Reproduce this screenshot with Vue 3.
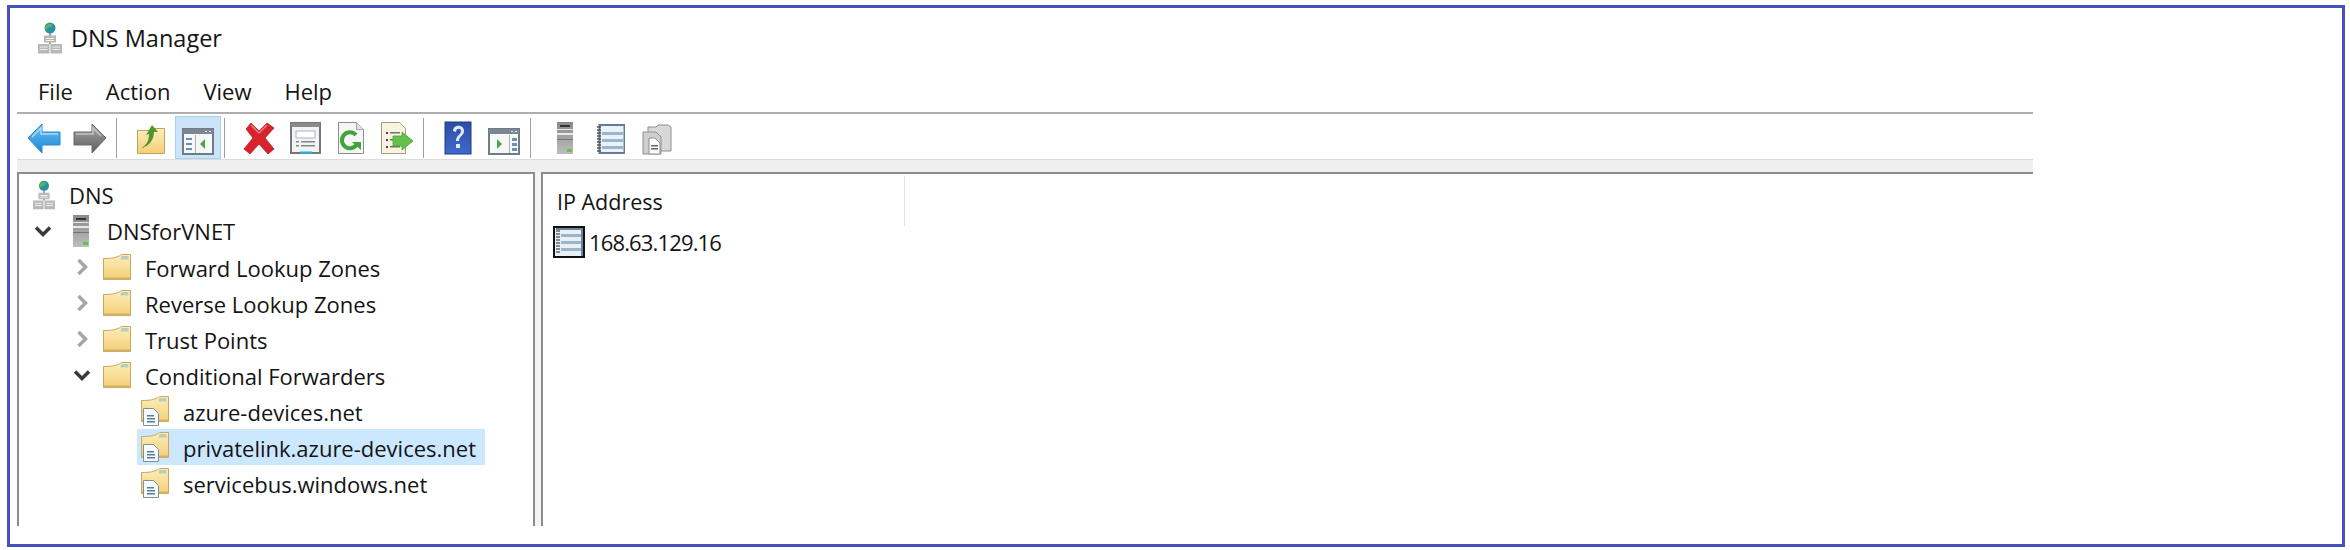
<script setup>
const menus = ['File', 'Action', 'View', 'Help']

const tree = [
  { level: 0, icon: 'dns', label: 'DNS' },
  { level: 1, icon: 'server', label: 'DNSforVNET', chevron: 'open' },
  { level: 2, icon: 'folder', label: 'Forward Lookup Zones', chevron: 'closed' },
  { level: 2, icon: 'folder', label: 'Reverse Lookup Zones', chevron: 'closed' },
  { level: 2, icon: 'folder', label: 'Trust Points', chevron: 'closed' },
  { level: 2, icon: 'folder', label: 'Conditional Forwarders', chevron: 'open' },
  { level: 3, icon: 'zone', label: 'azure-devices.net' },
  { level: 3, icon: 'zone', label: 'privatelink.azure-devices.net', selected: true },
  { level: 3, icon: 'zone', label: 'servicebus.windows.net' }
]
</script>

<template>
  <div class="frame">
    <svg class="defs" width="0" height="0" aria-hidden="true">
      <defs>
        <linearGradient id="g-folder" x1="0" y1="0" x2="0" y2="1">
          <stop offset="0" stop-color="#fdeeba" />
          <stop offset="1" stop-color="#f3cf78" />
        </linearGradient>
        <linearGradient id="g-blue" x1="0" y1="0" x2="0" y2="1">
          <stop offset="0" stop-color="#6fc0f2" />
          <stop offset="1" stop-color="#1a86d8" />
        </linearGradient>
        <linearGradient id="g-gray" x1="0" y1="0" x2="0" y2="1">
          <stop offset="0" stop-color="#a8a8a8" />
          <stop offset="1" stop-color="#5c5c5c" />
        </linearGradient>
        <linearGradient id="g-server" x1="0" y1="0" x2="0" y2="1">
          <stop offset="0" stop-color="#8a8a8a" />
          <stop offset="1" stop-color="#bdbdbd" />
        </linearGradient>
        <linearGradient id="g-help" x1="0" y1="0" x2="0" y2="1">
          <stop offset="0" stop-color="#2d4da6" />
          <stop offset="1" stop-color="#4169c8" />
        </linearGradient>
        <symbol id="dns" viewBox="0 0 24 32">
          <circle cx="12" cy="6" r="5.500" fill="#2c8fa8" />
          <path d="M8 3.500c2-2 5-2 6-1 1 1-1 3-3 3s-1 3-3 2-1-3 0-4z" fill="#5fb35a" />
          <path d="M11 11h2v3h-2zM11 20h2v2h-2z" fill="#9a9a9a" />
          <path d="M6 13.500h12v7H6zM0 22h11.500v9.500H0zM12.500 22H24v9.500H12.500z" fill="#b8b8b8" />
          <path d="M8 16h8v1H8zM8 18h8v1H8zM2 24.500h7.500v1H2zM2 27h7.500v1H2zM14.500 24.500H22v1h-7.500zM14.500 27H22v1h-7.500z" fill="#efefef" />
        </symbol>
        <symbol id="server" viewBox="0 0 16 32">
          <rect width="16" height="32" fill="url(#g-server)" />
          <rect x="3" y="3" width="10" height="2" fill="#333" />
          <path d="M0 7h16v1H0zM0 11h16v2H0z" fill="#e8e8e8" />
          <rect y="17" width="16" height="1" fill="#777" />
          <rect x="10" y="27" width="5" height="3" fill="#63c24a" />
        </symbol>
        <symbol id="folder" viewBox="0 0 28 26">
          <path d="M.5 25.500V4.500C8 4.500 14 4 18.500.5h9v25z" fill="url(#g-folder)" stroke="#c9a75f" />
          <path d="M18.500 2h7v3.500h-8z" fill="#b6cdbf" />
          <path d="M1 24.500h26" stroke="#d4b26a" stroke-width="2" />
        </symbol>
        <symbol id="notebook" viewBox="0 0 28 30">
          <rect x="2.500" y="1" width="25" height="28" fill="#eaf1f7" stroke="#667a94" stroke-width="2" />
          <path d="M5 8h21v3H5zM5 15h21v3H5zM5 22h21v3H5z" fill="#9ab6cc" />
          <path d="M0 3h4M0 6h4M0 9h4M0 12h4M0 15h4M0 18h4M0 21h4M0 24h4M0 27h4" stroke="#555" stroke-width="1.400" />
        </symbol>
      </defs>
    </svg>

    <div class="window">
      <div class="title-bar">
        <svg class="title-icon" width="24" height="32"><use href="#dns" /></svg>
        <span class="title-text">DNS Manager</span>
      </div>

      <div class="menu-bar">
        <span v-for="m in menus" :key="m" class="menu-item">{{ m }}</span>
      </div>

      <div class="toolbar">
        <!-- back -->
        <div class="tool">
          <svg width="34" height="34" viewBox="0 0 34 34">
            <path d="M1 17 15 3v8h18v13H15v8z" fill="url(#g-blue)" stroke="#2a8ad6" />
            <path d="M5 16 14 7v6h17" fill="none" stroke="#a9dcf8" stroke-width="1.500" />
          </svg>
        </div>
        <!-- forward -->
        <div class="tool">
          <svg width="34" height="34" viewBox="0 0 34 34">
            <path d="M33 17 19 3v8H1v13h18v8z" fill="url(#g-gray)" stroke="#6b6b6b" />
            <path d="M3 13h17V7l8 8" fill="none" stroke="#c4c4c4" stroke-width="1.500" />
          </svg>
        </div>
        <div class="tool-sep"></div>
        <!-- up one level -->
        <div class="tool">
          <svg width="34" height="34" viewBox="0 0 34 34">
            <path d="M3.500 9.500h13l3-2h11v25h-27z" fill="url(#g-folder)" stroke="#c2a15c" />
            <path d="M7 27c6-3 8-8 8-14l-3 1 6-10 6 7-4 0c0 7-4 14-13 16z" fill="#4c9a2e" />
          </svg>
        </div>
        <!-- show/hide tree -->
        <div class="tool tool-on">
          <svg width="34" height="34" viewBox="0 0 34 34">
            <rect x="2" y="8" width="30" height="25" fill="#f5f8f6" stroke="#6f7b88" stroke-width="2" />
            <path d="M2 8h30v5H2z" fill="#7b8794" />
            <path d="M24 10h2v1h-2zM28 10h2v1h-2z" fill="#e8e8e8" />
            <path d="M14 14h1v18h-1z" fill="#aab2bb" />
            <path d="M5 17h6v2H5zM5 22h6v2H5zM5 27h6v2H5z" fill="#6a8fb5" />
            <path d="M24 18v10l-5-5z" fill="#4fa63c" />
          </svg>
        </div>
        <div class="tool-sep"></div>
        <!-- delete -->
        <div class="tool">
          <svg width="34" height="34" viewBox="0 0 34 34">
            <path d="M4 8 9 2l8 8 8-8 7 5-9 10 9 11-6 5-9-10-9 10-6-5 9-11z" fill="#d9232a" stroke="#b81d22" stroke-width=".8" />
            <path d="M9 4l8 8 8-8" fill="none" stroke="#f47f7f" stroke-width="1.500" />
          </svg>
        </div>
        <!-- properties -->
        <div class="tool">
          <svg width="34" height="34" viewBox="0 0 34 34">
            <rect x="3" y="2" width="29" height="30" fill="#f3f3f3" stroke="#777" stroke-width="2" />
            <rect x="3" y="2" width="29" height="4" fill="#8a8a8a" />
            <path d="M8 10h19v7H8z" fill="#fff" stroke="#a9b3bc" />
            <path d="M8 20h3v1.500H8zM13 20h14v1.500H13zM8 24h3v1.500H8zM13 24h14v1.500H13z" fill="#7a8896" />
            <rect x="12" y="30.500" width="12" height="2.500" fill="#32a6dd" />
          </svg>
        </div>
        <!-- refresh -->
        <div class="tool">
          <svg width="34" height="34" viewBox="0 0 34 34">
            <path d="M4.500 1.500h18l7 7v24h-25z" fill="#f6f6f4" stroke="#8d8d8d" />
            <path d="M22.500 1.500v7h7" fill="#e2e2e2" stroke="#a5a5a5" />
            <path d="M22 14a8 8 0 1 0 1 9" fill="none" stroke="#3da53a" stroke-width="4" />
            <path d="M18 21h9v8z" fill="#3da53a" />
          </svg>
        </div>
        <!-- export list -->
        <div class="tool">
          <svg width="34" height="34" viewBox="0 0 34 34">
            <path d="M1.500 1.500h18l6 6v25h-24z" fill="#f9f3df" stroke="#a29a84" />
            <path d="M6 11h2v2H6zM6 18h2v2H6zM6 25h2v2H6z" fill="#444" />
            <path d="M10 11h10v1.500H10zM10 18h10v1.500H10zM10 25h10v1.500H10z" fill="#75736b" />
            <path d="M13 15h9v-4l11 9-11 9v-4h-9z" fill="#62c24c" stroke="#4ca53b" stroke-width=".8" />
          </svg>
        </div>
        <div class="tool-sep"></div>
        <!-- help -->
        <div class="tool">
          <svg width="34" height="34" viewBox="0 0 34 34">
            <rect x="4" y="1" width="26" height="32" fill="url(#g-help)" stroke="#1f3a86" />
            <path d="M12 10c0-7 11-7 11 0 0 5-5 5-5 10h-3c0-6 5-6 5-10 0-3-5-3-5 1z" fill="#dfe7f8" />
            <rect x="15" y="23" width="4" height="4" fill="#dfe7f8" />
          </svg>
        </div>
        <!-- action pane -->
        <div class="tool">
          <svg width="34" height="34" viewBox="0 0 34 34">
            <rect x="2" y="8" width="30" height="25" fill="#f5f8f6" stroke="#6f7b88" stroke-width="2" />
            <path d="M2 8h30v5H2z" fill="#7b8794" />
            <path d="M24 10h2v1h-2zM28 10h2v1h-2z" fill="#e8e8e8" />
            <path d="M22 14h1v18h-1z" fill="#aab2bb" />
            <path d="M25 17h5v3h-5zM25 22h5v3h-5zM25 27h5v3h-5z" fill="#6a8fb5" />
            <path d="M10 18v10l5-5z" fill="#4fa63c" />
          </svg>
        </div>
        <div class="tool-sep"></div>
        <!-- server -->
        <div class="tool">
          <svg width="34" height="34" viewBox="0 0 34 34">
            <use href="#server" x="9" y="1" width="16" height="32" />
          </svg>
        </div>
        <!-- notebook -->
        <div class="tool">
          <svg width="34" height="34" viewBox="0 0 34 34">
            <use href="#notebook" x="3" y="3" width="28" height="30" />
          </svg>
        </div>
        <!-- copy -->
        <div class="tool">
          <svg width="34" height="34" viewBox="0 0 34 34">
            <path d="M8 6h8l2-2h10l3 2v24H8z" fill="#d8d8d8" stroke="#8f8f8f" />
            <path d="M3 11h13l5 5v17H3z" fill="#cfcfcf" stroke="#8f8f8f" />
            <path d="M9 17h6l5 5v11H9z" fill="#fafafa" stroke="#8f8f8f" />
            <path d="M11 24h7v1.500h-7zM11 27h7v1.500h-7z" fill="#666" />
          </svg>
        </div>
      </div>

      <div class="band"></div>

      <div class="panes">
        <div class="tree-pane">
          <div
            v-for="row in tree"
            :key="row.label"
            class="tree-row"
            :class="'level-' + row.level"
          >
            <span v-if="row.level === 1 || row.level === 2" class="chevron">
              <svg v-if="row.chevron === 'open'" width="18" height="12" viewBox="0 0 18 12">
                <path d="M2 2.500 9 9.500l7-7" fill="none" stroke="#3a3a3a" stroke-width="3.500" />
              </svg>
              <svg v-else width="12" height="18" viewBox="0 0 12 18">
                <path d="M2.500 2 9.500 9l-7 7" fill="none" stroke="#a6a6a6" stroke-width="3.500" />
              </svg>
            </span>
            <div class="tree-item" :class="{ selected: row.selected }">
              <span class="tree-icon">
                <svg v-if="row.icon === 'dns'" width="22" height="32"><use href="#dns" /></svg>
                <svg v-else-if="row.icon === 'server'" width="16" height="32"><use href="#server" /></svg>
                <svg v-else-if="row.icon === 'folder'" width="28" height="26"><use href="#folder" /></svg>
                <svg v-else width="30" height="30" viewBox="0 0 30 30">
                  <use href="#folder" x="1" y="0" width="28" height="26" />
                  <path d="M3.500 12.500h10l5 5v12h-15z" fill="#f8fbfd" stroke="#7d8f9c" />
                  <path d="M7 19h7v1.500H7zM7 22h8v1.500H7zM7 25h8v1.500H7z" fill="#4e7f9c" />
                </svg>
              </span>
              <span class="tree-label">{{ row.label }}</span>
            </div>
          </div>
        </div>

        <div class="list-pane">
          <div class="list-head">
            <span class="col-title">IP Address</span>
          </div>
          <div class="list-row">
            <svg class="row-icon" width="32" height="32" viewBox="0 0 32 32">
              <rect x="1" y="1" width="30" height="30" fill="#e9f0f6" stroke="#111" stroke-width="2" />
              <rect x="28" y="2" width="2" height="28" fill="#6d83a0" />
              <rect x="3" y="2" width="26" height="2" fill="#6d83a0" />
              <path d="M8 8h20v3H8zM8 15h20v3H8zM8 22h20v3H8z" fill="#9ab6cc" />
              <path d="M3 5h4M3 8h4M3 11h4M3 14h4M3 17h4M3 20h4M3 23h4M3 26h4" stroke="#666" stroke-width="1.400" />
            </svg>
            <span class="row-text">168.63.129.16</span>
          </div>
        </div>
      </div>
    </div>
  </div>
</template>

<style>
body {
  background: #fff;
}
</style>

<style scoped>
.frame {
  box-sizing: border-box;
  width: 2338px;
  height: 542px;
  margin: 5px 0 0 7px;
  padding: 0 0 18px 7px;
  border: 3px solid #4650bc;
  background: #fff;
  font-family: "Open Sans", "Noto Sans", sans-serif;
  color: #141414;
}

.defs {
  display: block;
}

.window {
  display: flex;
  flex-direction: column;
  width: 2016px;
  height: 100%;
}

.title-bar {
  display: flex;
  align-items: center;
  gap: 9px;
  height: 60px;
  padding-left: 21px;
  flex: none;
}

.title-text {
  font-size: 23.500px;
}

.menu-bar {
  display: flex;
  align-items: center;
  height: 44px;
  padding: 2px 0 0 21px;
  box-sizing: border-box;
  flex: none;
}

.menu-item {
  font-size: 22px;
  margin-right: 33px;
}

.toolbar {
  display: flex;
  align-items: center;
  height: 47px;
  box-sizing: border-box;
  padding: 2px 0 0 4px;
  border-top: 2px solid #b0b0b0;
  flex: none;
}

.tool {
  box-sizing: border-box;
  display: flex;
  align-items: center;
  justify-content: center;
  width: 46px;
  height: 43px;
  flex: none;
}

.tool-on {
  margin-left: 1px;
  background: #cce4f7;
  border: 1px solid #a9d0ef;
}

.tool-sep {
  width: 1px;
  height: 40px;
  margin: 0 11px 0 3px;
  background: #a0a0a0;
  flex: none;
}

.band {
  height: 13px;
  background: #efefef;
  border-top: 1px solid #dcdcdc;
  box-sizing: border-box;
  flex: none;
}

.panes {
  display: flex;
  flex: 1;
  min-height: 0;
  background: #f3f3f3;
}

.tree-pane {
  box-sizing: border-box;
  width: 518px;
  padding-top: 3px;
  border: solid #8c8c8c;
  border-width: 2px 2px 0 2px;
  background: #fff;
  flex: none;
}

.tree-row {
  display: flex;
  align-items: center;
  height: 36px;
  font-size: 22px;
}

.level-2 .tree-label,
.level-3 .tree-label {
  padding-top: 1px;
}

.tree-item {
  display: flex;
  align-items: center;
  height: 36px;
  padding-right: 9px;
}

.tree-item.selected {
  background: #cce8ff;
}

.chevron {
  display: flex;
  align-items: center;
  justify-content: center;
  width: 24px;
  flex: none;
}

.tree-icon {
  display: flex;
  align-items: center;
  justify-content: center;
  width: 30px;
  flex: none;
}

.level-0 {
  padding-left: 10px;
}

.level-0 .tree-label {
  margin-left: 10px;
}

.level-1 {
  padding-left: 12px;
}

.level-1 .tree-icon {
  margin-left: 11px;
}

.level-1 .tree-label {
  margin-left: 11px;
}

.level-2 {
  padding-left: 51px;
}

.level-2 .tree-icon {
  margin-left: 8px;
}

.level-2 .tree-label {
  margin-left: 13px;
}

.level-3 {
  padding-left: 118px;
}

.level-3 .tree-icon {
  margin-left: 3px;
}

.level-3 .tree-label {
  margin-left: 13px;
}

.list-pane {
  box-sizing: border-box;
  margin-left: 6px;
  flex: 1;
  border: solid #8c8c8c;
  border-width: 2px 0 0 2px;
  background: #fff;
}

.list-head {
  box-sizing: border-box;
  width: 362px;
  height: 50px;
  margin-top: 2px;
  padding-left: 14px;
  border-right: 1px solid #e2e2e2;
  display: flex;
  align-items: center;
}

.col-title {
  font-size: 21.500px;
}

.list-row {
  display: flex;
  align-items: center;
  gap: 4px;
  padding-left: 10px;
}

.row-text {
  font-size: 22px;
  letter-spacing: -0.850px;
}
</style>
